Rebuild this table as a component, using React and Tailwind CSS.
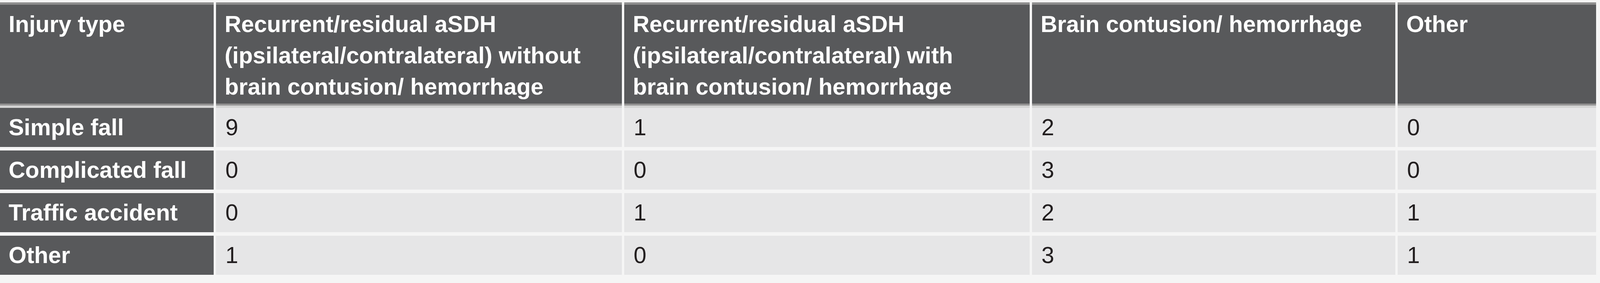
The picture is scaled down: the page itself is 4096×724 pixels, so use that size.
const cols = "grid grid-cols-[547px_1039px_1038px_930px_508px] gap-x-[6px]";

const headers = [
  ["Injury type"],
  ["Recurrent/residual aSDH", "(ipsilateral/contralateral) without", "brain contusion/ hemorrhage"],
  ["Recurrent/residual aSDH", "(ipsilateral/contralateral) with", "brain contusion/ hemorrhage"],
  ["Brain contusion/ hemorrhage"],
  ["Other"],
];

const rows = [
  ["Simple fall", "9", "1", "2", "0"],
  ["Complicated fall", "0", "0", "3", "0"],
  ["Traffic accident", "0", "1", "2", "1"],
  ["Other", "1", "0", "3", "1"],
];

function HeaderCell({ lines }) {
  return (
    <div className="flex flex-col">
      <div className="h-[6px] bg-[#8e8e8e]" />
      <div className="h-[253px] bg-[#58595b] pl-[22px] pt-[10px] text-white font-bold text-[59px] leading-[80px] whitespace-nowrap">
        {lines.map((l, i) => (
          <div key={i}>{l}</div>
        ))}
      </div>
      <div className="h-[5px] bg-[#939393]" />
      <div className="h-[6px] bg-[#d3d3d3]" />
    </div>
  );
}

export default function App() {
  return (
    <div
      className="w-[4096px] h-[724px] bg-[#f5f5f5] pt-[6px] overflow-hidden"
      style={{ fontFamily: '"Liberation Sans", Arial, sans-serif' }}
    >
      <div className={cols}>
        {headers.map((h, i) => (
          <HeaderCell key={i} lines={h} />
        ))}
      </div>

      <div className="flex flex-col gap-y-[9px]">
        {rows.map((r, ri) => (
          <div key={ri} className={cols}>
            <div className="h-[100px] bg-[#58595b] flex items-center pl-[22px] text-white font-bold text-[59px] leading-[80px] whitespace-nowrap">
              {r[0]}
            </div>
            {r.slice(1).map((v, ci) => (
              <div
                key={ci}
                className="h-[100px] bg-[#e6e6e7] flex items-center pl-[24px] text-[#231f20] text-[59px] leading-[80px]"
              >
                {v}
              </div>
            ))}
          </div>
        ))}
      </div>
    </div>
  );
}
